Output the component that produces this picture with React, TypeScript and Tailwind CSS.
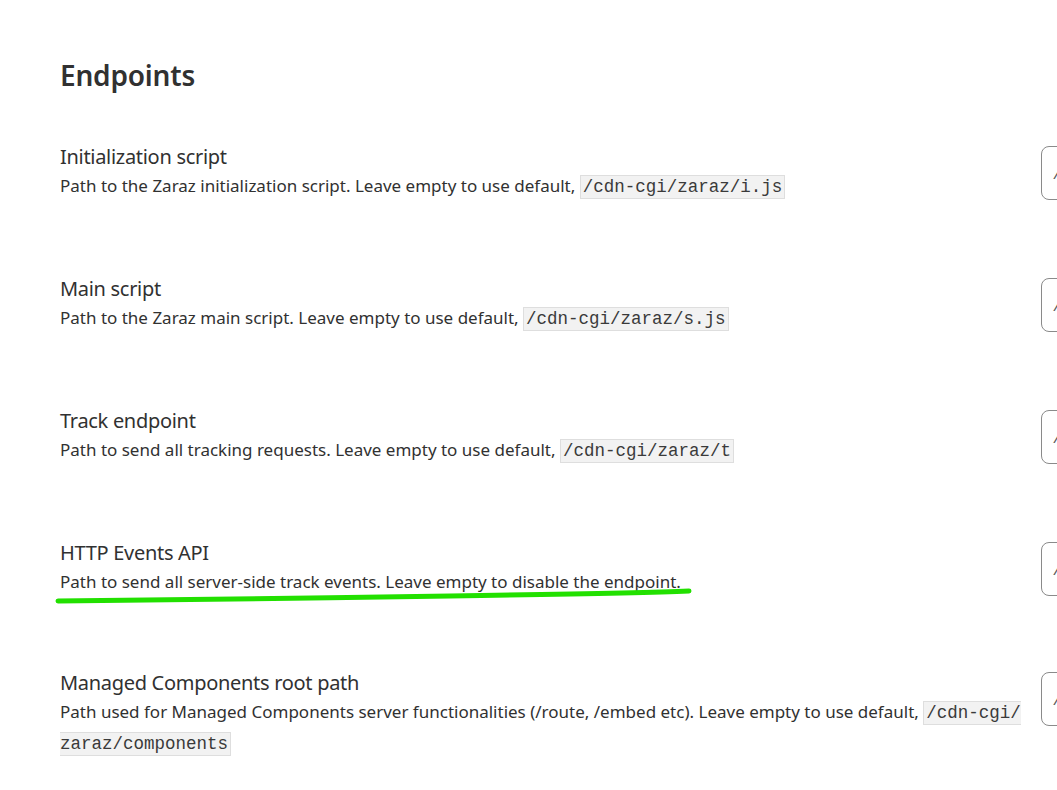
import React from "react";

type Row = {
  title: string;
  desc: string;
  code?: string[];
};

const rows: Row[] = [
  {
    title: "Initialization script",
    desc: "Path to the Zaraz initialization script. Leave empty to use default, ",
    code: ["/cdn-cgi/zaraz/i.js"],
  },
  {
    title: "Main script",
    desc: "Path to the Zaraz main script. Leave empty to use default, ",
    code: ["/cdn-cgi/zaraz/s.js"],
  },
  {
    title: "Track endpoint",
    desc: "Path to send all tracking requests. Leave empty to use default, ",
    code: ["/cdn-cgi/zaraz/t"],
  },
  {
    title: "HTTP Events API",
    desc: "Path to send all server-side track events. Leave empty to disable the endpoint.",
  },
  {
    title: "Managed Components root path",
    desc: "Path used for Managed Components server functionalities (/route, /embed etc). Leave empty to use default, ",
    code: ["/cdn-cgi/", "zaraz/components"],
  },
];

export default function App() {
  return (
    <div
      className="relative w-[1057px] h-[790px] overflow-hidden bg-white text-[#313131]"
      style={{ fontFamily: '"Noto Sans", "Open Sans", sans-serif' }}
    >
      <div className="pl-[60px] pt-[57px]">
        <h2 className="text-[28px] font-semibold leading-[36px] tracking-[-0.2px]">Endpoints</h2>

        <div className="mt-[50px] flex flex-col gap-[73px]">
          {rows.map((row) => (
            <div key={row.title} className="flex items-start gap-[11px]">
              <div className="w-[970px] shrink-0">
                <div className="text-[20px] leading-[28px] tracking-[-0.3px]">{row.title}</div>
                <p className="text-[17px] leading-[29px]">
                  {row.desc}
                  {row.code && (
                    <code
                      className="bg-[#f2f2f2] border border-[#dedede] px-[2px] py-[1px] text-[17.5px] text-[#3a3a3a]"
                      style={{ fontFamily: '"Liberation Mono", monospace' }}
                    >
                      {row.code.map((part, i) => (
                        <React.Fragment key={part}>
                          {i > 0 && <wbr />}
                          <span className="whitespace-nowrap">{part}</span>
                        </React.Fragment>
                      ))}
                    </code>
                  )}
                </p>
              </div>
              <div className="mt-[3px] w-[220px] h-[54px] shrink-0 rounded-[8px] border border-[#8a8a8a] flex items-center pl-[12px] text-[15px] text-[#555] italic">
                /
              </div>
            </div>
          ))}
        </div>
      </div>

      {/* hand-drawn highlight */}
      <svg className="absolute left-0 top-0 pointer-events-none" width="1057" height="790">
        <path
          d="M58 601 C 200 600, 320 598, 450 596 S 640 593, 689 591"
          stroke="#22e000"
          strokeWidth="5"
          strokeLinecap="round"
          fill="none"
        />
      </svg>
    </div>
  );
}
